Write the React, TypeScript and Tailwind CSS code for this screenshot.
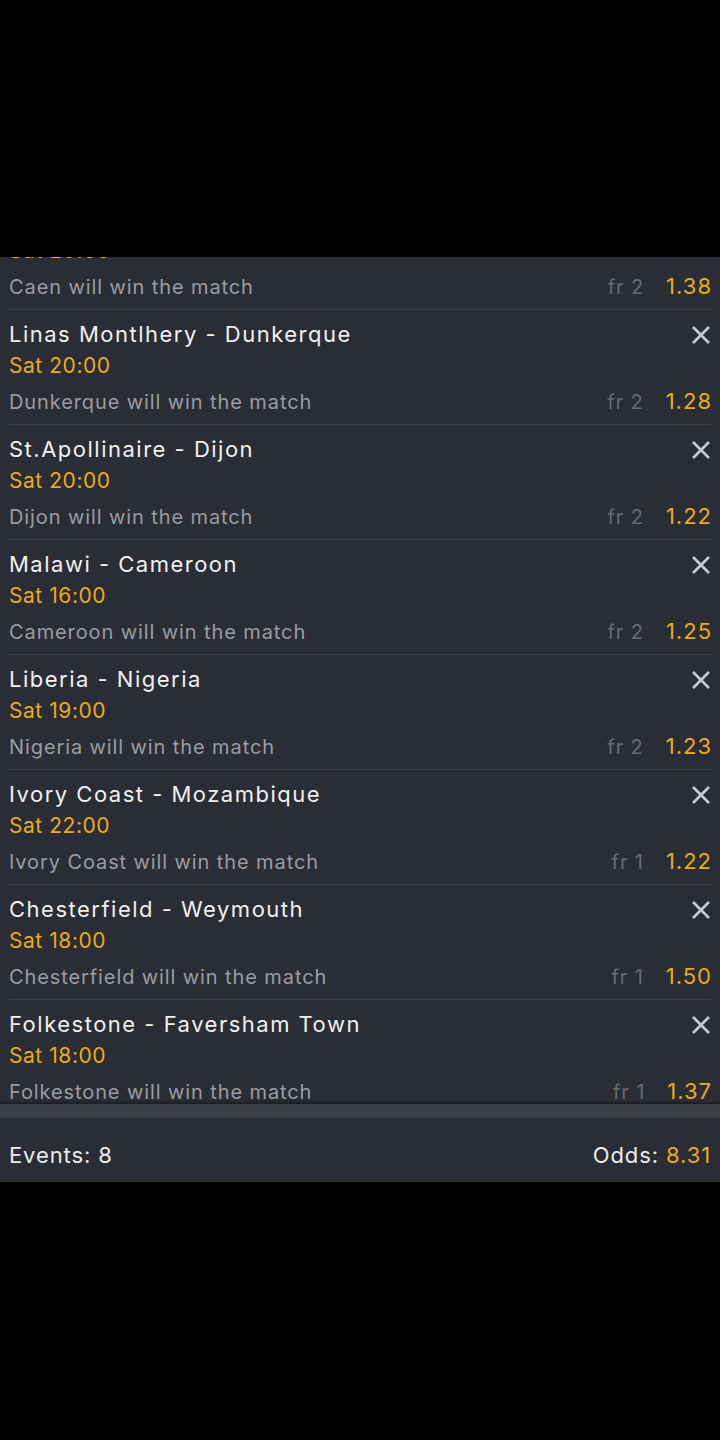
import React from "react";

const rows = [
  { title: "Paris FC - Caen", time: "Sat 20:00", sel: "Caen will win the match", fr: "fr 2", odd: "1.38" },
  { title: "Linas Montlhery - Dunkerque", time: "Sat 20:00", sel: "Dunkerque will win the match", fr: "fr 2", odd: "1.28" },
  { title: "St.Apollinaire - Dijon", time: "Sat 20:00", sel: "Dijon will win the match", fr: "fr 2", odd: "1.22" },
  { title: "Malawi - Cameroon", time: "Sat 16:00", sel: "Cameroon will win the match", fr: "fr 2", odd: "1.25" },
  { title: "Liberia - Nigeria", time: "Sat 19:00", sel: "Nigeria will win the match", fr: "fr 2", odd: "1.23" },
  { title: "Ivory Coast - Mozambique", time: "Sat 22:00", sel: "Ivory Coast will win the match", fr: "fr 1", odd: "1.22" },
  { title: "Chesterfield - Weymouth", time: "Sat 18:00", sel: "Chesterfield will win the match", fr: "fr 1", odd: "1.50" },
  { title: "Folkestone - Faversham Town", time: "Sat 18:00", sel: "Folkestone will win the match", fr: "fr 1", odd: "1.37" },
];

function XIcon() {
  return (
    <svg width="20" height="20" viewBox="0 0 20 20" className="block">
      <path d="M2 2 L18 18 M18 2 L2 18" stroke="#c9cacd" strokeWidth="2.6" strokeLinecap="butt" />
    </svg>
  );
}

function Row({ r }: { r: (typeof rows)[number] }) {
  return (
    <div className="ml-[9px] mr-[9px] h-[115px] border-b border-[#3c3f47] flex flex-col">
      <div className="flex items-center justify-between h-[47px] pt-[1px]">
        <span className="text-[22px] text-[#f1f1f1] tracking-[1.5px]">{r.title}</span>
        <div className="mt-[2px]">
          <XIcon />
        </div>
      </div>
      <div className="text-[21px] text-[#eaab15] leading-none -mt-[2px] tracking-[0.55px]">{r.time}</div>
      <div className="flex items-center justify-between mt-[9px]">
        <span className="text-[20px] text-[#9a9ca1] tracking-[0.9px]">{r.sel}</span>
        <div className="flex items-center">
          <span className="text-[20px] text-[#686b72] tracking-[0.9px]">{r.fr}</span>
          <span className="text-[22px] text-[#eaab15] ml-[22px] tracking-[1px] -mr-[1px]">{r.odd}</span>
        </div>
      </div>
    </div>
  );
}

export default function App() {
  return (
    <div className="w-[720px] h-[1440px] bg-black flex flex-col" style={{ fontFamily: "Inter, 'Open Sans', sans-serif" }}>
      <div className="h-[257px]" />
      <div className="bg-[#2a2d35]">
        <div className="h-[847px] overflow-hidden">
          <div className="-mt-[62px]">
            {rows.map((r, i) => (
              <Row key={i} r={r} />
            ))}
          </div>
        </div>
        <div className="h-[14px] bg-[#3d4049] shadow-[0_-2px_2px_rgba(0,0,0,0.35)]" />
        <div className="h-[64px] flex items-center justify-between px-[9px] pt-[10px]">
          <span className="text-[22px] text-[#ececec] tracking-[0.9px]">Events: 8</span>
          <span className="text-[22px] text-[#ececec] tracking-[0.9px]">
            Odds: <span className="text-[#eaab15]">8.31</span>
          </span>
        </div>
      </div>
    </div>
  );
}
